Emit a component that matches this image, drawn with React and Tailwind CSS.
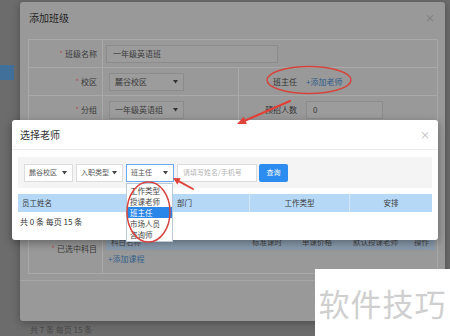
import React from "react";

function Caret({ color = "#333" }) {
  return (
    <svg width="5" height="4" viewBox="0 0 5 4" className="shrink-0">
      <polygon points="0,0 5,0 2.5,3.5" fill={color} />
    </svg>
  );
}

function Label({ star = true, children }) {
  return (
    <div className="w-[74px] shrink-0 border-r border-[#a9a9a9] flex items-center justify-end pr-[5px] text-[8px] text-[#3a3a3a]">
      {star && <span className="text-[#a65b5b] mr-[2px]">*</span>}
      {children}
    </div>
  );
}

function DimSelect({ children, w }) {
  return (
    <div className={`${w} h-[18px] border border-[#8c8c8c] bg-[#9c9c9c] flex items-center justify-between px-[5px] text-[8px] text-[#3a3a3a]`}>
      <span className="whitespace-nowrap">{children}</span>
      <Caret color="#333" />
    </div>
  );
}

function FSelect({ children, w, active }) {
  return (
    <div className={`${w} h-[18px] border ${active ? "border-[#6aa9ee]" : "border-[#dcdcdc]"} bg-white flex items-center justify-between pl-[4px] pr-[5px] text-[7px] text-[#555]`}>
      <span className="whitespace-nowrap">{children}</span>
      <Caret color="#444" />
    </div>
  );
}

export default function App() {
  return (
    <div className="relative w-[450px] h-[336px] overflow-hidden bg-[#6c6c6c] font-['Noto_Sans_CJK_SC',sans-serif]">
      {/* page behind */}
      <div className="absolute left-0 top-[65px] w-[14px] h-[15px] bg-[#41709a]" />
      <div className="absolute left-[30px] top-[324px] text-[8px] text-[#4a4a4a]">共 7 条 每页 15 条</div>

      {/* outer dialog */}
      <div className="absolute left-[20px] top-[2px] w-[425px] h-[319px] bg-[#999999] rounded-[3px] shadow-[0_2px_8px_rgba(0,0,0,0.3)] flex flex-col">
        <div className="h-[30px] flex items-center justify-between pl-[9px] pr-[10px]">
          <span className="text-[10px] text-[#262626]">添加班级</span>
          <span className="text-[10px] text-[#7a7a7a]">×</span>
        </div>
        <div className="mt-[7px] ml-[8px] w-[410px] border border-[#a9a9a9] flex flex-col">
          <div className="h-[28px] flex border-b border-[#a9a9a9]">
            <Label>班级名称</Label>
            <div className="flex items-center pl-[3px]">
              <div className="w-[172px] h-[18px] border border-[#8c8c8c] bg-[#9c9c9c] flex items-center px-[6px] text-[8px] text-[#3a3a3a]">一年级英语班</div>
            </div>
          </div>
          <div className="h-[28px] flex border-b border-[#a9a9a9]">
            <Label>校区</Label>
            <div className="w-[136px] border-r border-[#a9a9a9] flex items-center pl-[6px]">
              <DimSelect w="w-[75px]">麓谷校区</DimSelect>
            </div>
            <div className="w-[62px] flex items-center justify-end pr-[4px] text-[8px] text-[#333]">班主任</div>
            <div className="flex items-center pl-[5px] text-[8px] text-[#2f5d8c]">+添加老师</div>
          </div>
          <div className="h-[28px] flex border-b border-[#a9a9a9]">
            <Label>分组</Label>
            <div className="w-[136px] border-r border-[#a9a9a9] flex items-center pl-[6px]">
              <DimSelect w="w-[75px]">一年级英语组</DimSelect>
            </div>
            <div className="w-[62px] flex items-center justify-end pr-[4px] text-[8px] text-[#333]">预招人数</div>
            <div className="flex items-center pl-[5px]">
              <div className="w-[77px] h-[18px] border border-[#8c8c8c] bg-[#9c9c9c] flex items-center px-[6px] text-[8px] text-[#3a3a3a]">0</div>
            </div>
          </div>
          <div className="h-[101px] flex border-b border-[#a9a9a9]">
            <Label>开班日期</Label>
          </div>
          <div className="h-[48px] flex">
            <Label>已选中科目</Label>
            <div className="flex-1 flex flex-col pl-[3px] pr-[2px] pt-[5px]">
              <div className="h-[20px] bg-[#8a9cae] flex items-end pb-[3px] text-[7.5px] text-[#444]">
                <div className="w-[137px] flex items-center pl-[5px]">科目名称</div>
                <div className="w-[48px] flex items-center justify-center">标准课时</div>
                <div className="w-[52px] flex items-center justify-center">单课价格</div>
                <div className="w-[65px] flex items-center justify-center">默认授课老师</div>
                <div className="flex-1 flex items-center justify-center">操作</div>
              </div>
              <div className="h-[18px] flex items-center pl-[2px] text-[8px] text-[#335f8c]">+添加课程</div>
            </div>
          </div>
        </div>
        <div className="mt-[6px] border-t border-[#a6a6a6]" />
      </div>

      {/* inner dialog */}
      <div className="absolute left-[12px] top-[120px] w-[426px] h-[120px] bg-white rounded-[3px] shadow-[0_3px_10px_rgba(0,0,0,0.35)] flex flex-col">
        <div className="h-[30px] border-b border-[#ececec] flex items-center justify-between pl-[8px] pr-[8px]">
          <span className="text-[10px] text-[#333]">选择老师</span>
          <span className="text-[10px] text-[#b5b5b5]">×</span>
        </div>
        <div className="px-[6px] pt-[7px] flex flex-col">
          <div className="h-[31px] bg-[#f4f4f4] flex items-center pl-[6px]">
            <FSelect w="w-[49px]">麓谷校区</FSelect>
            <div className="ml-[3px]"><FSelect w="w-[47px]">入职类型</FSelect></div>
            <div className="ml-[3px]"><FSelect w="w-[48px]" active>班主任</FSelect></div>
            <div className="ml-[3px] w-[80px] h-[18px] border border-[#dcdcdc] bg-white flex items-center px-[5px] text-[7px] text-[#b3b3b3] whitespace-nowrap">请填写姓名/手机号</div>
            <div className="ml-[2px] w-[29px] h-[18px] rounded-[2px] bg-[#2d8cf0] flex items-center justify-center text-[7px] text-white">查询</div>
          </div>
          <div className="mt-[6px] h-[18px] bg-[#b5d8f7] flex text-[7.5px] text-[#3a3a3a]">
            <div className="w-[154px] flex items-center pl-[4px] border-r border-[#d2e7fa]">员工姓名</div>
            <div className="w-[78px] flex items-center pl-[5px] border-r border-[#d2e7fa]">部门</div>
            <div className="w-[100px] flex items-center justify-center border-r border-[#d2e7fa]">工作类型</div>
            <div className="flex-1 flex items-center justify-center">安排</div>
          </div>
          <div className="h-[19px] flex items-center pl-[2px] text-[8px] text-[#333]">共 0 条 每页 15 条</div>
        </div>
      </div>

      {/* dropdown */}
      <div className="absolute left-[126px] top-[183px] w-[47px] bg-white border border-[#b9c9d9] flex flex-col py-[1px] text-[7.5px] text-[#444]">
        <div className="h-[11px] flex items-center pl-[3px]">工作类型</div>
        <div className="h-[11px] flex items-center pl-[3px]">授课老师</div>
        <div className="h-[11px] flex items-center pl-[3px] bg-[#2a86e8] text-white">班主任</div>
        <div className="h-[11px] flex items-center pl-[3px]">市场人员</div>
        <div className="h-[11px] flex items-center pl-[3px]">咨询师</div>
      </div>

      {/* annotations */}
      <svg className="absolute inset-0 pointer-events-none" width="450" height="336" viewBox="0 0 450 336">
        <ellipse cx="309" cy="80" rx="42" ry="13.5" fill="none" stroke="#d6453d" strokeWidth="1.5" />
        <ellipse cx="148.5" cy="212" rx="21.5" ry="30" fill="none" stroke="#d6453d" strokeWidth="1.5" />
        <line x1="290" y1="101" x2="245.3" y2="120.4" stroke="#e0413a" strokeWidth="2.2" strokeLinecap="round" />
        <polygon points="237,124 246.9,124.1 243.7,116.7" fill="#e0413a" />
        <line x1="193" y1="189" x2="179.1" y2="181.4" stroke="#e0413a" strokeWidth="1.8" strokeLinecap="round" />
        <polygon points="173,178 180.8,178.3 177.4,184.5" fill="#e0413a" />
      </svg>

      {/* watermark */}
      <div className="absolute right-0 bottom-0 w-[135px] h-[67px] bg-white flex items-center justify-center">
        <span className="text-[31px] leading-none text-[#cfcfcf] tracking-[1px]">软件技巧</span>
      </div>
    </div>
  );
}
